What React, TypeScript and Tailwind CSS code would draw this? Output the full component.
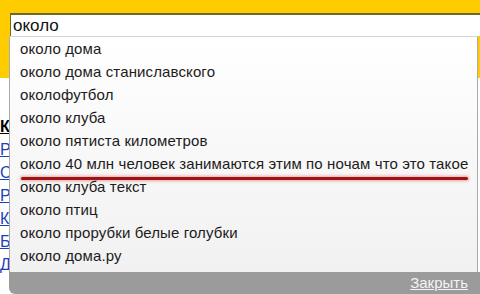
const suggestions = [
  "около дома",
  "около дома станиславского",
  "околофутбол",
  "около клуба",
  "около пятиста километров",
  "около 40 млн человек занимаются этим по ночам что это такое",
  "около клуба текст",
  "около птиц",
  "около прорубки белые голубки",
  "около дома.ру",
];

const sideLinks = ["Р", "С", "Р", "К", "Б", "Д"];

// Строка, которую обвели красной чертой на скриншоте
const MARKED = 5;

export default function App() {
  return (
    <div className="relative h-[294px] w-[480px] overflow-hidden bg-white font-['Liberation_Sans',Arial,sans-serif]">
      {/* Шапка страницы */}
      <div className="h-[78px] bg-[#ffcc00]" />

      {/* Обрезанный контент страницы слева */}
      <div className="flex flex-col pt-[37px] text-[16px] leading-[23px]">
        <span className="font-bold text-black underline">К</span>
        {sideLinks.map((l, i) => (
          <span key={i} className="text-[#1a3fc0] underline">
            {l}
          </span>
        ))}
      </div>

      {/* Саджест поверх страницы */}
      <div className="absolute bottom-0 left-[9px] right-0 top-[13px] flex flex-col">
        {/* Поле поиска */}
        <div className="ml-px flex h-[23px] items-center border-l border-t-2 border-[#6e6530] bg-white pl-[2px] text-[17px] text-[#111]">
          около
        </div>

        {/* Подсказки */}
        <div className="flex w-[469px] flex-1 flex-col border-x border-t border-x-[#a9a9a9] border-t-[#d6d6d6] bg-gradient-to-b from-white to-[#f1f1f1] pt-[1px]">
          {suggestions.map((s, i) => (
            <div
              key={s}
              className="relative flex h-[23px] items-center whitespace-nowrap pl-[10px] text-[15px] tracking-[0.12px] text-[#1c1c1c]"
            >
              {s}
              {i === MARKED && (
                <span className="absolute left-[11px] top-[24px] h-[3px] w-[447px] rounded-full bg-[#9e1414] shadow-[0_0_3px_1px_rgba(220,90,90,0.55)]" />
              )}
            </div>
          ))}
        </div>

        {/* Нижняя панель */}
        <div className="flex h-[22px] items-center justify-end rounded-bl-[6px] bg-[#9b9b9b] pr-[12px]">
          <span className="text-[15px] text-[#f4f4f4] underline">Закрыть</span>
        </div>
      </div>
    </div>
  );
}
